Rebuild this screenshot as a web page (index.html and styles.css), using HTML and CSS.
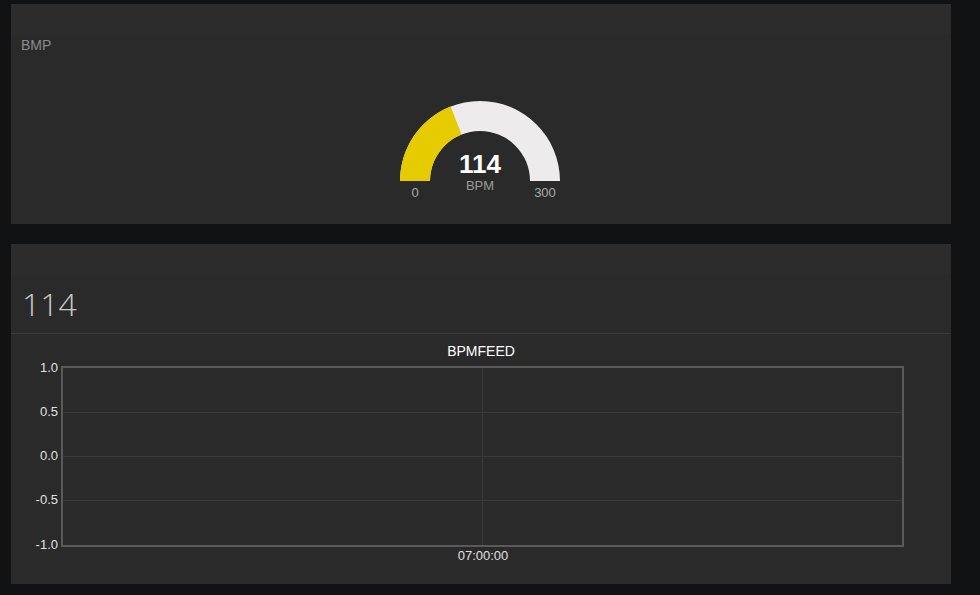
FILE: index.html
```html
<!DOCTYPE html>
<html>
<head>
<meta charset="utf-8">
<link rel="stylesheet" href="styles.css">
</head>
<body>
<div class="page">
  <section class="panel panel-gauge">
    <div class="panel-head"></div>
    <div class="panel-body">
      <div class="label">BMP</div>
      <div class="gauge-wrap">
        <svg class="gauge" width="180" height="112" viewBox="0 0 180 112">
          <path d="M10 90 A80 80 0 0 1 170 90 L140 90 A50 50 0 0 0 40 90 Z" fill="#edebec"/>
          <path d="M10 90 A80 80 0 0 1 60.55 15.62 L71.6 43.51 A50 50 0 0 0 40 90 Z" fill="#e5cb00"/>
          <text x="90" y="82" class="g-value" text-anchor="middle">114</text>
          <text x="90" y="99" class="g-unit" text-anchor="middle">BPM</text>
          <text x="25" y="106" class="g-tick" text-anchor="middle">0</text>
          <text x="155" y="106" class="g-tick" text-anchor="middle">300</text>
        </svg>
      </div>
    </div>
  </section>
  <section class="panel panel-chart">
    <div class="panel-head"></div>
    <div class="value-row">114</div>
    <div class="chart">
      <svg width="940" height="250" viewBox="0 0 940 250">
        <text x="470" y="22" class="c-title" text-anchor="middle">BPMFEED</text>
        <g stroke="#3a3a3a" stroke-width="1">
          <line x1="51" y1="78.5" x2="892" y2="78.5"/>
          <line x1="51" y1="122.5" x2="892" y2="122.5"/>
          <line x1="51" y1="166.5" x2="892" y2="166.5"/>
          <line x1="471.5" y1="33" x2="471.5" y2="212"/>
        </g>
        <rect x="51" y="33" width="841" height="179" fill="none" stroke="#5a5a5a" stroke-width="2"/>
        <g class="c-tick" text-anchor="end">
          <text x="47" y="38">1.0</text>
          <text x="47" y="82">0.5</text>
          <text x="47" y="126">0.0</text>
          <text x="47" y="170">-0.5</text>
          <text x="47" y="215">-1.0</text>
        </g>
        <text x="472" y="226" class="c-tick" text-anchor="middle">07:00:00</text>
      </svg>
    </div>
  </section>
</div>
</body>
</html>
```
FILE: styles.css
```css
html, body {
  margin: 0;
  padding: 0;
  background: #111214;
  font-family: "Liberation Sans", Arial, sans-serif;
}
.page {
  padding: 4px 0 0 11px;
  display: flex;
  flex-direction: column;
  gap: 20px;
}
.panel {
  width: 940px;
  background: #2a2a2a;
}
.panel-head {
  height: 30px;
  background: #2c2c2c;
}
.panel-gauge {
  height: 220px;
}
.panel-body {
  display: flex;
  flex-direction: column;
}
.label {
  padding: 3px 10px 0;
  font-size: 14px;
  line-height: 16px;
  color: #8a8a8a;
}
.gauge-wrap {
  display: flex;
  justify-content: center;
  margin-top: 38px;
  padding-right: 2px;
}
.gauge {
  display: block;
}
.g-value {
  font-family: "Liberation Sans", Arial, sans-serif;
  font-weight: bold;
  font-size: 26px;
  fill: #ffffff;
}
.g-unit {
  font-size: 13px;
  fill: #9a9a9a;
}
.g-tick {
  font-size: 13px;
  fill: #aaaaaa;
}
.panel-chart {
  height: 340px;
}
.value-row {
  box-sizing: border-box;
  height: 60px;
  border-bottom: 1px solid #3a3a3a;
  padding: 0 11px 1px;
  display: flex;
  align-items: center;
  font-family: "Open Sans", sans-serif;
  font-weight: 300;
  font-size: 32px;
  color: #c8c8c8;
}
.chart svg {
  display: block;
}
.c-title {
  font-size: 14px;
  fill: #ffffff;
}
.c-tick {
  font-size: 13px;
  fill: #e0e0e0;
}
```
